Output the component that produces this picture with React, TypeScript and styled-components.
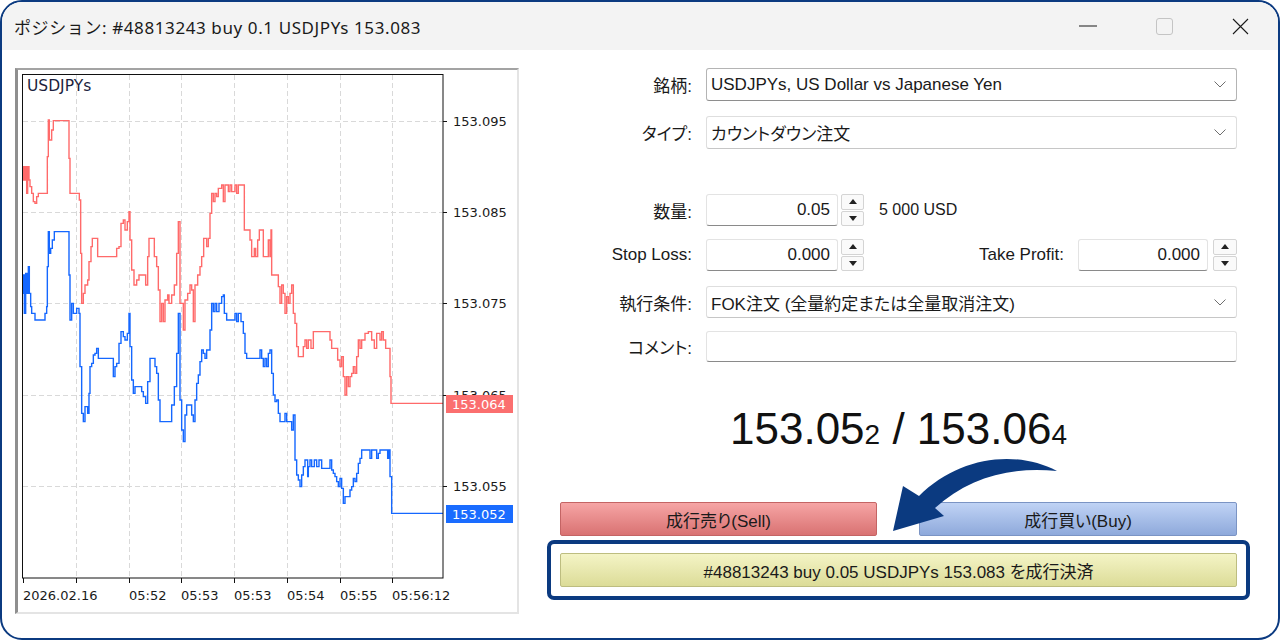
import React from "react";
import styled, { createGlobalStyle } from "styled-components";

const NAVY = "#0b3a80";

const GlobalStyle = createGlobalStyle`
  html, body { margin: 0; padding: 0; background: #fff; }
  body {
    font-family: "Liberation Sans", "Noto Sans CJK JP", sans-serif;
    font-feature-settings: "palt";
    color: #1a1a1a;
  }
  * { box-sizing: border-box; }
`;

const Window = styled.div`
  width: 1280px;
  height: 640px;
  border: 2px solid ${NAVY};
  border-radius: 22px;
  overflow: hidden;
  display: flex;
  flex-direction: column;
  background: #fff;
`;

const TitleBar = styled.div`
  height: 48px;
  flex-shrink: 0;
  background: #f3f3f3;
  display: flex;
  align-items: center;
  padding-left: 12px;
`;

const Title = styled.div`
  flex: 1;
  font: 17px "Noto Sans", "Noto Sans CJK JP", sans-serif;
  letter-spacing: 0.6px;
  color: #1a1a1a;
`;

const Controls = styled.div`
  display: flex;
  height: 100%;
`;

const ControlButton = styled.div`
  width: 76px;
  display: flex;
  align-items: center;
  justify-content: center;
`;

const Body = styled.div`
  flex: 1;
  display: flex;
  padding: 18px 0 0 13px;
`;

const ChartPanel = styled.div`
  width: 504px;
  height: 546px;
  flex-shrink: 0;
  border-style: solid;
  border-width: 2px 2px 2px 3px;
  border-color: #a3a3a3 #e4e4e4 #e4e4e4 #8f8f8f;
  background: #fff;

  svg {
    display: block;
  }
`;

const FormColumn = styled.div`
  position: relative;
  width: 677px;
  margin-left: 41px;
  display: flex;
  flex-direction: column;
`;

const Row = styled.div<{ $mt: number; $h: number }>`
  display: flex;
  align-items: center;
  height: ${({ $h }) => $h}px;
  margin-top: ${({ $mt }) => $mt}px;
`;

const Label = styled.div`
  width: 132px;
  margin-right: 14px;
  flex-shrink: 0;
  text-align: right;
  white-space: nowrap;
  font-size: 17px;
`;

const SideLabel = styled.div`
  flex: 1;
  margin-right: 14px;
  text-align: right;
  white-space: nowrap;
  font-size: 17px;
`;

const Select = styled.div<{ $focus?: boolean }>`
  flex: 1;
  height: 100%;
  display: flex;
  align-items: center;
  justify-content: space-between;
  padding: 0 10px 0 4px;
  background: #fff;
  border: 1px solid ${({ $focus }) => ($focus ? "#b4b4b4" : "#dedede")};
  border-bottom-color: ${({ $focus }) => ($focus ? "#8e8e8e" : "#c6c6c6")};
  border-radius: 3px;
  font-size: 17px;
  white-space: nowrap;
`;

const TextBox = styled.div<{ $w?: number }>`
  ${({ $w }) => ($w ? `width: ${$w}px;` : "flex: 1;")}
  height: 100%;
  display: flex;
  align-items: center;
  justify-content: flex-end;
  padding-right: 7px;
  background: #fff;
  border: 1px solid #e3e3e3;
  border-bottom-color: #8a8a8a;
  border-radius: 3px;
  font-size: 17px;
`;

const Spinner = styled.div<{ $ml: number; $w: number }>`
  width: ${({ $w }) => $w}px;
  height: 100%;
  margin-left: ${({ $ml }) => $ml}px;
  display: flex;
  flex-direction: column;
  gap: 1px;
`;

const SpinButton = styled.div`
  flex: 1;
  display: flex;
  align-items: center;
  justify-content: center;
  background: #fafafa;
  border: 1px solid #d4d4d4;
  border-radius: 2px;
`;

const Hint = styled.div`
  margin-left: 15px;
  font-size: 16px;
`;

const Price = styled.div`
  margin-top: 45px;
  text-align: center;
  font: 44px "Liberation Sans", sans-serif;
  line-height: 1;
  color: #111;
`;

const Pip = styled.span`
  font-size: 28px;
`;

const ActionRow = styled.div`
  display: flex;
  justify-content: space-between;
  margin-top: 51px;
`;

const tones = {
  sell: { top: "#f6a5a5", bottom: "#d97272", border: "#c46464" },
  buy: { top: "#c0d3f5", bottom: "#8ea9db", border: "#7b94c4" },
  close: { top: "#f4f4c6", bottom: "#dcdc98", border: "#bdbd80" },
};

const TradeButton = styled.div<{ $tone: keyof typeof tones; $w?: number }>`
  ${({ $w }) => ($w ? `width: ${$w}px;` : "width: 100%;")}
  height: 34px;
  display: flex;
  align-items: center;
  justify-content: center;
  font-size: 17px;
  color: #1a1a1a;
  border: 1px solid ${({ $tone }) => tones[$tone].border};
  border-radius: 2px;
  background: linear-gradient(
    ${({ $tone }) => tones[$tone].top},
    ${({ $tone }) => tones[$tone].bottom}
  );
`;

const Highlight = styled.div`
  margin: 4px -13px 0;
  padding: 9px;
  border: 4px solid ${NAVY};
  border-radius: 7px;
`;

const ArrowLayer = styled.svg`
  position: absolute;
  left: 0;
  top: 0;
  pointer-events: none;
`;

// tick lines traced from the MT5 chart (in 3x zoom coords, offset 15/100)
const ask = [
  [22, 240], [25, 200], [28, 240], [32, 200], [35, 280], [38, 200], [42, 240], [45, 260], [50, 280],
  [55, 305], [60, 310], [65, 290], [70, 280], [95, 280], [97, 170], [100, 60], [103, 120], [108, 120],
  [110, 90], [115, 62], [158, 62], [162, 175], [165, 280], [190, 280], [193, 300], [197, 460],
  [200, 610], [205, 580], [210, 555], [218, 540], [222, 485], [228, 440], [232, 415], [242, 415],
  [248, 470], [298, 470], [305, 445], [312, 440], [318, 370], [325, 360], [330, 390], [337, 365],
  [342, 335], [345, 420], [350, 510], [357, 555], [365, 540], [372, 525], [385, 525], [392, 555],
  [398, 470], [402, 415], [410, 415], [418, 470], [425, 500], [430, 570], [435, 665], [440, 610],
  [445, 665], [450, 600], [458, 585], [462, 610], [470, 585], [478, 555], [485, 460], [490, 365],
  [495, 610], [505, 690], [510, 600], [518, 580], [525, 555], [530, 570], [535, 665], [540, 555],
  [548, 525], [555, 500], [560, 470], [566, 415], [575, 440], [580, 415], [585, 340], [590, 280],
  [595, 305], [600, 280], [605, 290], [610, 265], [620, 255], [625, 305], [630, 255], [640, 275],
  [645, 255], [650, 275], [660, 255], [665, 280], [670, 255], [685, 255], [688, 390], [700, 390],
  [705, 420], [710, 470], [718, 445], [722, 470], [728, 420], [733, 390], [740, 390], [745, 470],
  [760, 420], [765, 470], [768, 390], [770, 525], [785, 525], [790, 560], [795, 610], [800, 555],
  [805, 580], [810, 640], [815, 590], [820, 610], [825, 580], [830, 555], [835, 640], [840, 670],
  [845, 740], [850, 770], [860, 770], [865, 740], [870, 720], [875, 745], [880, 720], [888, 745],
  [895, 695], [940, 695], [945, 720], [950, 745], [962, 745], [968, 780], [975, 800], [980, 770],
  [985, 830], [990, 885], [995, 830], [1000, 860], [1005, 830], [1010, 820], [1015, 800], [1020, 820],
  [1025, 770], [1030, 720], [1035, 745], [1040, 720], [1050, 700], [1060, 695], [1070, 720],
  [1078, 745], [1085, 700], [1095, 720], [1100, 695], [1105, 720], [1112, 745], [1120, 745],
  [1125, 830], [1128, 910], [1290, 910],
];

const bid = [
  [22, 580], [25, 525], [28, 640], [32, 520], [36, 580], [40, 500], [43, 580], [47, 620], [50, 640],
  [55, 640], [60, 660], [75, 660], [85, 660], [90, 640], [95, 620], [97, 500], [100, 395], [103, 460],
  [107, 445], [112, 420], [118, 395], [158, 395], [162, 525], [165, 660], [170, 610], [175, 640],
  [185, 625], [192, 640], [195, 800], [200, 940], [205, 965], [210, 920], [218, 940], [222, 880],
  [225, 800], [230, 790], [235, 765], [240, 760], [245, 745], [250, 775], [290, 775], [295, 830],
  [300, 800], [305, 790], [312, 730], [318, 695], [325, 710], [330, 720], [337, 700], [342, 640],
  [345, 740], [350, 840], [355, 880], [360, 860], [375, 860], [380, 875], [385, 890], [392, 910],
  [398, 845], [405, 775], [415, 775], [420, 800], [425, 820], [430, 900], [435, 965], [465, 965],
  [470, 915], [478, 860], [485, 760], [490, 640], [495, 900], [500, 990], [505, 1025], [510, 945],
  [515, 915], [525, 915], [530, 945], [535, 965], [540, 900], [545, 850], [550, 825], [555, 785],
  [560, 750], [565, 760], [570, 775], [575, 750], [582, 750], [585, 690], [590, 610], [595, 635],
  [600, 610], [605, 635], [612, 610], [620, 590], [625, 585], [628, 640], [635, 660], [660, 640],
  [665, 665], [670, 640], [678, 665], [685, 700], [690, 760], [695, 775], [730, 775], [735, 750],
  [740, 775], [745, 800], [750, 775], [755, 800], [760, 760], [765, 750], [770, 820], [775, 885],
  [780, 905], [785, 900], [790, 940], [795, 965], [805, 965], [810, 940], [815, 965], [825, 965],
  [830, 990], [835, 945], [840, 1080], [845, 1125], [850, 1140], [855, 1160], [860, 1125],
  [865, 1100], [870, 1080], [878, 1130], [880, 1100], [885, 1080], [890, 1100], [898, 1080],
  [905, 1100], [912, 1080], [920, 1105], [940, 1105], [945, 1080], [950, 1110], [955, 1120],
  [960, 1130], [965, 1145], [970, 1160], [975, 1135], [980, 1165], [985, 1210], [990, 1190],
  [1000, 1190], [1005, 1170], [1010, 1160], [1015, 1135], [1020, 1145], [1025, 1120], [1030, 1090],
  [1035, 1075], [1040, 1050], [1060, 1050], [1065, 1075], [1070, 1050], [1080, 1050], [1085, 1075],
  [1090, 1060], [1095, 1050], [1110, 1050], [1118, 1075], [1122, 1050], [1125, 1130], [1130, 1240],
  [1290, 1240],
];

const stepPath = (pts: number[][]) =>
  pts.map(([x, y], i) => (i === 0 ? `M${x} ${y}` : `H${x}V${y}`)).join("");

const priceGrid = [
  { y: 121, label: "153.095" },
  { y: 212, label: "153.085" },
  { y: 303, label: "153.075" },
  { y: 395, label: "153.065" },
  { y: 486, label: "153.055" },
];

const timeGrid = [
  { x: 23, label: "2026.02.16" },
  { x: 76, label: "" },
  { x: 129, label: "05:52" },
  { x: 181, label: "05:53" },
  { x: 234, label: "05:53" },
  { x: 287, label: "05:54" },
  { x: 340, label: "05:55" },
  { x: 392, label: "05:56:12" },
];

const chartFont = { fontFamily: "DejaVu Sans, sans-serif", fontSize: 13 };

const TickChart = () => (
  <svg width={499} height={542} viewBox="18 70 499 542">
    <defs>
      <clipPath id="plot">
        <rect x={23} y={75} width={420} height={503} />
      </clipPath>
      <clipPath id="axis-hidden">
        <rect x={446} y={380} width={70} height={15} />
      </clipPath>
    </defs>
    {priceGrid.map((g) => (
      <line key={g.y} x1={23} x2={443} y1={g.y + 0.5} y2={g.y + 0.5} stroke="#d9d9d9" strokeDasharray="5 3" />
    ))}
    {timeGrid.slice(1).map((g) => (
      <line key={g.x} x1={g.x + 0.5} x2={g.x + 0.5} y1={75} y2={578} stroke="#d9d9d9" strokeDasharray="5 3" />
    ))}
    <g clipPath="url(#plot)">
      <g transform="translate(15 100) scale(0.333333)">
        <path d={stepPath(ask)} fill="none" stroke="#ff6a6a" strokeWidth={1.4} vectorEffect="non-scaling-stroke" />
        <path d={stepPath(bid)} fill="none" stroke="#1467ff" strokeWidth={1.4} vectorEffect="non-scaling-stroke" />
      </g>
    </g>
    <rect x={22.5} y={74.5} width={420.5} height={503.5} fill="none" stroke="#111" />
    <text x={27} y={91} fill="#1c1f3e" fontFamily="DejaVu Sans, sans-serif" fontSize={15.5}>
      USDJPYs
    </text>
    {priceGrid.map((g) => (
      <g key={g.label}>
        <line x1={443} x2={447} y1={g.y + 0.5} y2={g.y + 0.5} stroke="#111" />
        <text
          x={453}
          y={g.y + 5}
          fill="#1a1a1a"
          clipPath={g.label === "153.065" ? "url(#axis-hidden)" : undefined}
          {...chartFont}
        >
          {g.label}
        </text>
      </g>
    ))}
    {timeGrid.map((g) => (
      <g key={g.x}>
        <line x1={g.x + 0.5} x2={g.x + 0.5} y1={578} y2={583} stroke="#111" />
        {g.label && (
          <text x={g.x} y={600} fill="#1a1a1a" {...chartFont}>{g.label}</text>
        )}
      </g>
    ))}
    <rect x={446} y={395} width={67} height={18} fill="#fb6f6f" />
    <text x={452} y={409} fill="#fff" {...chartFont}>153.064</text>
    <rect x={446} y={505} width={67} height={18} fill="#1a6cff" />
    <text x={452} y={519} fill="#fff" {...chartFont}>153.052</text>
  </svg>
);

const Chevron = () => (
  <svg width={12} height={7} viewBox="0 0 12 7">
    <polyline points="0.5,0.5 6,6 11.5,0.5" fill="none" stroke="#6e6e6e" strokeWidth={1} />
  </svg>
);

const Triangle = ({ up }: { up?: boolean }) => (
  <svg width={8} height={5} viewBox="0 0 8 5">
    <polygon points={up ? "0,5 4,0 8,5" : "0,0 8,0 4,5"} fill="#222" />
  </svg>
);

const Spin = ({ ml, w }: { ml: number; w: number }) => (
  <Spinner $ml={ml} $w={w}>
    <SpinButton>
      <Triangle up />
    </SpinButton>
    <SpinButton>
      <Triangle />
    </SpinButton>
  </Spinner>
);

const App = () => (
  <>
    <GlobalStyle />
    <Window>
      <TitleBar>
        <Title>ポジション: #48813243 buy 0.1 USDJPYs 153.083</Title>
        <Controls>
          <ControlButton>
            <svg width={18} height={2} viewBox="0 0 18 2">
              <rect x={0} y={0.5} width={18} height={1} fill="#1a1a1a" />
            </svg>
          </ControlButton>
          <ControlButton>
            <svg width={17} height={17} viewBox="0 0 17 17">
              <rect x={0.5} y={0.5} width={16} height={16} rx={2.5} fill="none" stroke="#c4c4c4" />
            </svg>
          </ControlButton>
          <ControlButton>
            <svg width={17} height={17} viewBox="0 0 17 17">
              <path d="M1 1L16 16M16 1L1 16" stroke="#1a1a1a" strokeWidth={1.1} />
            </svg>
          </ControlButton>
        </Controls>
      </TitleBar>
      <Body>
        <ChartPanel>
          <TickChart />
        </ChartPanel>
        <FormColumn>
          <Row $mt={0} $h={33}>
            <Label>銘柄:</Label>
            <Select $focus>
              <span>USDJPYs, US Dollar vs Japanese Yen</span>
              <Chevron />
            </Select>
          </Row>
          <Row $mt={15} $h={33}>
            <Label>タイプ:</Label>
            <Select>
              <span>カウントダウン注文</span>
              <Chevron />
            </Select>
          </Row>
          <Row $mt={45} $h={32}>
            <Label>数量:</Label>
            <TextBox $w={132}>0.05</TextBox>
            <Spin ml={3} w={23} />
            <Hint>5 000 USD</Hint>
          </Row>
          <Row $mt={13} $h={32}>
            <Label>Stop Loss:</Label>
            <TextBox $w={132}>0.000</TextBox>
            <Spin ml={3} w={23} />
            <SideLabel>Take Profit:</SideLabel>
            <TextBox $w={130}>0.000</TextBox>
            <Spin ml={5} w={24} />
          </Row>
          <Row $mt={15} $h={32}>
            <Label>執行条件:</Label>
            <Select>
              <span>FOK注文 (全量約定または全量取消注文)</span>
              <Chevron />
            </Select>
          </Row>
          <Row $mt={13} $h={31}>
            <Label>コメント:</Label>
            <TextBox />
          </Row>
          <Price>
            153.05<Pip>2</Pip> / 153.06<Pip>4</Pip>
          </Price>
          <ActionRow>
            <TradeButton $tone="sell" $w={317}>成行売り(Sell)</TradeButton>
            <TradeButton $tone="buy" $w={318}>成行買い(Buy)</TradeButton>
          </ActionRow>
          <Highlight>
            <TradeButton $tone="close">#48813243 buy 0.05 USDJPYs 153.083 を成行決済</TradeButton>
          </Highlight>
          <ArrowLayer width={677} height={540} viewBox="560 68 677 540">
            <path
              d="M1057 471 C1015 449, 958 457, 919 496 L903 486 L893 531 L944 516 L935 508 C968 478, 1010 466, 1057 471 Z"
              fill={NAVY}
            />
          </ArrowLayer>
        </FormColumn>
      </Body>
    </Window>
  </>
);

export default App;
